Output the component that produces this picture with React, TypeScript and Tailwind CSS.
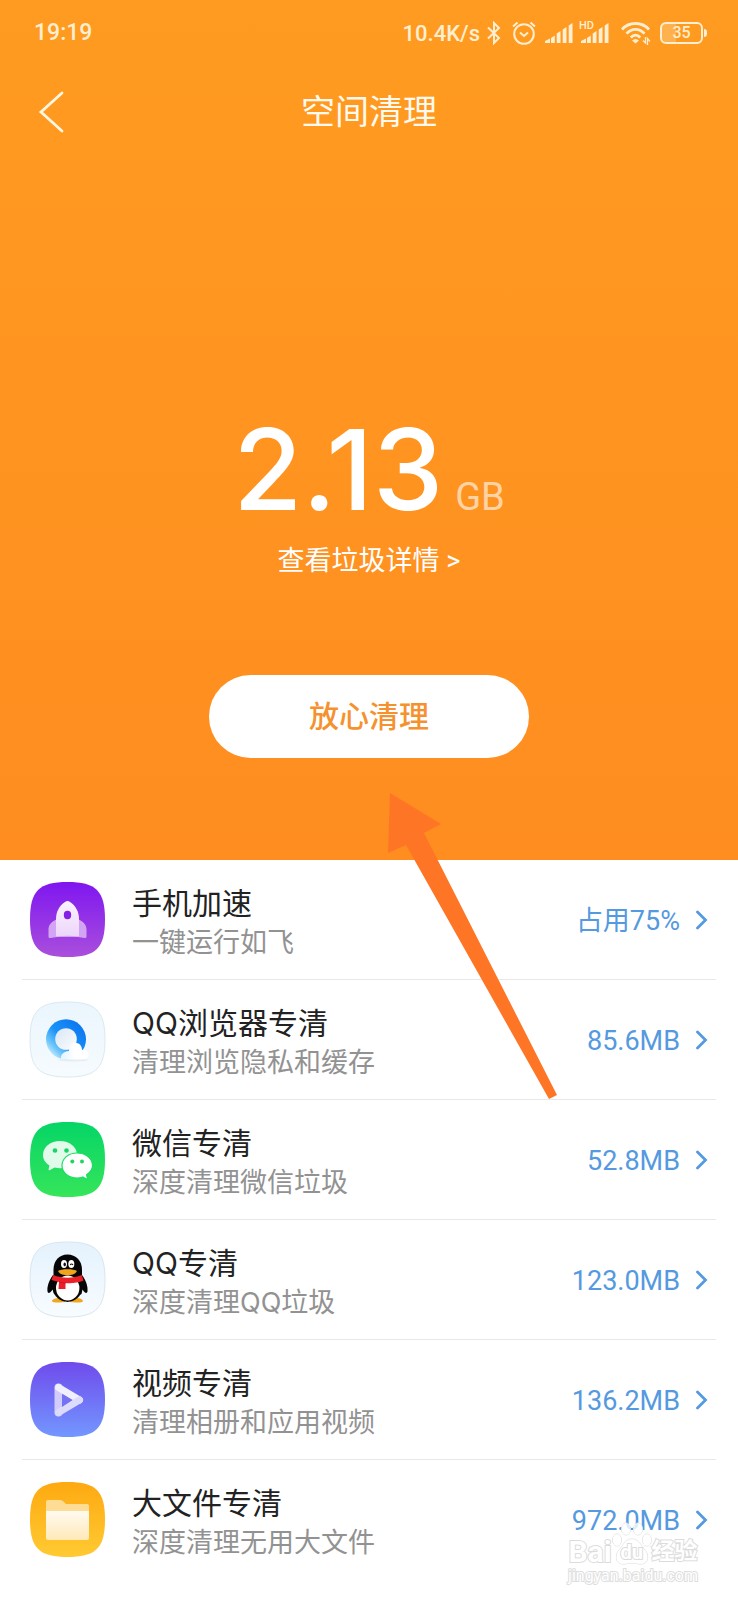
import type { ReactNode } from "react";

const SQUIRCLE =
  "M37.5 0C66 0 75 9 75 37.5S66 75 37.5 75 0 66 0 37.5 9 0 37.5 0Z";

interface AppIconProps {
  id: string;
  from: string;
  to: string;
  outline?: string;
  children: ReactNode;
}

function AppIcon({ id, from, to, outline, children }: AppIconProps) {
  return (
    <svg viewBox="0 0 75 75" className="size-[75px] shrink-0 overflow-visible" aria-hidden="true">
      <defs>
        <linearGradient id={id} x1="0" y1="0" x2="0" y2="1">
          <stop offset="0" stopColor={from} />
          <stop offset="1" stopColor={to} />
        </linearGradient>
      </defs>
      <path d={SQUIRCLE} fill={`url(#${id})`} stroke={outline ?? "none"} />
      {children}
    </svg>
  );
}

function RocketIcon() {
  return (
    <AppIcon id="bg-rocket" from="#7f16f0" to="#a94fdc">
      <defs>
        <linearGradient id="rocket-body" x1="0" y1="0" x2="0" y2="1">
          <stop offset="0" stopColor="#fbf3ff" />
          <stop offset="1" stopColor="#ecd5fa" />
        </linearGradient>
      </defs>
      <path
        d="M27 37C21 40 18.500 43 18.500 47.500V54.500Q18.500 56.500 20.500 56L27 55H48L54.500 56Q56.500 56.500 56.500 54.500V47.500C56.500 43 54 40 48 37Z"
        fill="#d3a4f3"
      />
      <path
        d="M37.500 19Q39 19 40 20C46 24 49 30 49 37V54.500Q37.500 53 26 54.500V37C26 30 29 24 35 20Q36 19 37.500 19Z"
        fill="url(#rocket-body)"
      />
      <ellipse cx="37.5" cy="33" rx="3.700" ry="4.200" fill="#8421e4" />
    </AppIcon>
  );
}

function BrowserIcon() {
  return (
    <AppIcon id="bg-browser" from="#eaf6fd" to="#f6fbfe" outline="#dbe9f1">
      <defs>
        <linearGradient id="browser-ring" x1="0.9" y1="0.2" x2="0.15" y2="0.95">
          <stop offset="0" stopColor="#0d77f0" />
          <stop offset="0.5" stopColor="#1a93f8" />
          <stop offset="0.8" stopColor="#71c8fb" />
          <stop offset="1" stopColor="#d8f0fd" />
        </linearGradient>
        <linearGradient id="browser-core" x1="0" y1="0" x2="1" y2="1">
          <stop offset="0" stopColor="#dbe6f3" />
          <stop offset="1" stopColor="#fafdff" />
        </linearGradient>
        <linearGradient id="browser-cloud" x1="0" y1="0" x2="1" y2="0">
          <stop offset="0" stopColor="#e3f3fd" />
          <stop offset="0.5" stopColor="#ffffff" />
        </linearGradient>
      </defs>
      <ellipse cx="43" cy="58" rx="15" ry="1.500" fill="#e2edf4" />
      <circle cx="36" cy="37.300" r="20" fill="url(#browser-ring)" />
      <circle cx="36" cy="37" r="10.800" fill="url(#browser-core)" />
      <path
        d="M31 57.500C30 53 34 49 39 49C39 43 43 40 47 41C50.500 42 52 45 52 48C56 47 59 50 58.500 53C58 56 56 57.500 53 57.500Z"
        fill="url(#browser-cloud)"
      />
    </AppIcon>
  );
}

function WechatIcon() {
  return (
    <AppIcon id="bg-wechat" from="#05d567" to="#36e55a">
      <path
        d="M30 19C20.500 19 13 25 13 33C13 37.500 15.500 41 19.500 43.500L18.500 47.500Q18.800 48.800 20.200 48L24.500 45.600Q27 46.300 30 46.300C40 46.300 47 40.500 47 32.500C47 25 39.500 19 30 19Z"
        fill="#e0fbe9"
      />
      <path
        d="M47 31C38.500 31 32 36.500 32 43.500S38.500 56 47 56C49 56 51 55.700 52.800 55L56.300 57Q57.500 57.300 57.300 56L56.600 52.800C60 50.500 62.500 47.300 62.500 43.500C62.500 36.500 55.500 31 47 31Z"
        fill="#fff"
        stroke="#1cdd60"
        strokeWidth="1.2"
      />
      <circle cx="25" cy="28.500" r="2.300" fill="#17d465" />
      <circle cx="36.500" cy="28.500" r="2.300" fill="#17d465" />
      <circle cx="42.300" cy="39.500" r="2" fill="#1fd65f" />
      <circle cx="52" cy="39.500" r="2" fill="#1fd65f" />
    </AppIcon>
  );
}

function PenguinIcon() {
  return (
    <AppIcon id="bg-penguin" from="#e4f2fd" to="#f8fcff" outline="#d8e6ee">
      <path
        d="M23 33C18.500 39 17 45 17.500 49.500C18 52 20.500 51 22.500 47.500L24 52L37.500 60L51.500 52L52.500 47.500C54.500 51 57 52 57.500 49.500C58 45 56.500 39 52 33Z"
        fill="#060606"
      />
      <path d="M30 56C25 56 22 57.500 22 59Q22 60.500 29 60.500L36 60 30 56ZM46 56C50 56 53 57.500 53 59Q53 60.500 46 60.500L39 60Z" fill="#f2a71b" />
      <path d="M37.500 12.500C29 12.500 23.500 19 23.500 27.500V37H52V27.500C52 19 46 12.500 37.500 12.500Z" fill="#060606" />
      <ellipse cx="37.500" cy="46" rx="14.500" ry="13.800" fill="#060606" />
      <ellipse cx="37.700" cy="46" rx="11.700" ry="12.500" fill="#fff" />
      <ellipse cx="34" cy="22" rx="3" ry="4" fill="#fff" />
      <ellipse cx="41.300" cy="22" rx="3" ry="4" fill="#fff" />
      <ellipse cx="34.700" cy="22.400" rx="1.200" ry="1.900" fill="#111" />
      <path d="M40.200 23Q41.500 21 43 23" fill="none" stroke="#111" strokeWidth="1.2" />
      <path d="M28 29C31 26.800 44 26.800 47 29C45 32.500 41 33.300 37.500 33.300S30 32.500 28 29Z" fill="#f3a51a" />
      <path d="M23.300 33C32 36.500 43 36.500 51.700 33L53.500 38.500C48 41 41 41.500 35.500 41V47H28.500L29 40L21.500 38Z" fill="#ec1f28" />
      <path d="M29 40L35.500 41.300" stroke="#b8141c" strokeWidth="0.8" />
    </AppIcon>
  );
}

function VideoIcon() {
  return (
    <AppIcon id="bg-video" from="#6f4bec" to="#7397ff">
      <path d="M28.500 25.500V50.500" stroke="#d2ccfa" strokeWidth="8" strokeLinecap="round" />
      <path d="M28.500 25.500L49.500 38" stroke="#f1effe" strokeWidth="7" strokeLinecap="round" />
      <path d="M28.500 50.500L49.500 38" stroke="#dddbfc" strokeWidth="7" strokeLinecap="round" />
      <path d="M32 32V45L42 38.300Z" fill="#7472f3" />
    </AppIcon>
  );
}

function FolderIcon() {
  return (
    <AppIcon id="bg-folder" from="#fea911" to="#ffca32">
      <defs>
        <linearGradient id="folder-front" x1="0" y1="0" x2="0" y2="1">
          <stop offset="0" stopColor="#fffaf0" />
          <stop offset="1" stopColor="#ffe9b8" />
        </linearGradient>
      </defs>
      <path d="M16 30V20Q16 18 18 18H30Q32 18 33.500 19.500L36 22H57Q59 22 59 24V30Z" fill="#ffdc94" />
      <path d="M16 29H59V56Q59 58 57 58H18Q16 58 16 56Z" fill="url(#folder-front)" />
    </AppIcon>
  );
}

function SignalBars({ className }: { className?: string }) {
  return (
    <svg viewBox="0 0 28 20" className={className} fill="currentColor" aria-hidden="true">
      <path d="M0 20V18L5 15.500V20ZM6 15L9.800 12.500V20H6ZM11.700 10.500L15.500 8V20H11.700ZM17.700 6.500L21.500 4V20H17.700ZM23.700 2.500L27.500 0V20H23.700Z" />
    </svg>
  );
}

function StatusBar() {
  return (
    <div className="flex h-[66px] items-center justify-between pr-[31px] pl-[34px] text-[#ffeed0]">
      <span className="text-[23px] font-medium">19:19</span>
      <div className="flex items-center">
        <span className="text-[22px] font-medium">10.4K/s</span>
        <svg viewBox="0 0 14 24" className="ml-[7px] h-6 w-[14px]" fill="none" stroke="currentColor" strokeWidth="2" aria-hidden="true">
          <path d="M1 6.500L12 17L7 22V2L12 7L1 17.500" />
        </svg>
        <svg viewBox="0 0 24 24" className="ml-[11px] size-6" fill="none" stroke="currentColor" strokeWidth="2" aria-hidden="true">
          <circle cx="12" cy="13" r="9.800" />
          <path d="M8 11.500L12 15L16 11.500M1 5.500L5.500 1.500M23 5.500L18.500 1.500" />
        </svg>
        <SignalBars className="ml-[9px] h-5 w-7" />
        <span className="relative ml-2">
          <SignalBars className="h-5 w-7" />
          <span className="absolute -top-[3px] -left-[2px] bg-[#ff9a20] text-[11px] leading-[11px] font-medium">
            HD
          </span>
        </span>
        <svg viewBox="0 0 30 24" className="ml-3 h-6 w-[30px]" aria-hidden="true">
          <g fill="none" stroke="currentColor" strokeWidth="2.800">
            <path d="M1 8.500C8 .5 21 .5 28 8.500" />
            <path d="M5.500 12.700C10.500 7 18.500 7 23.500 12.700" />
            <path d="M9.800 16.500C12.700 13.200 16.300 13.200 19.200 16.500" />
          </g>
          <path d="M11 19.500Q14.500 16.500 18 19.500L14.500 22.500Z" fill="currentColor" />
          <path d="M24.500 16V22L22 19.500M26.500 24V17.500L29 20.500" fill="none" stroke="currentColor" strokeWidth="1.300" />
        </svg>
        <span className="ml-[9px] flex h-[22px] w-[43px] items-center justify-center rounded-[6px] border-2 border-current bg-linear-to-r from-[#ffb14e] from-35% to-transparent to-35% text-[16px] leading-none font-medium">
          35
        </span>
        <span className="ml-px h-2 w-[3px] rounded-r-sm bg-current" />
      </div>
    </div>
  );
}

function Hero() {
  return (
    <header className="bg-linear-to-b from-[#ff9b20] to-[#ff8d20] pb-[102px] text-white">
      <StatusBar />
      <div className="grid h-[92px] grid-cols-[1fr_auto_1fr] items-center px-[38px]">
        <button type="button" aria-label="返回" className="justify-self-start">
          <svg viewBox="0 0 28 44" className="h-11 w-7" fill="none" stroke="#fff6e0" strokeWidth="2.800" strokeLinecap="round" aria-hidden="true">
            <path d="M24 3L3 22L24 41" />
          </svg>
        </button>
        <h1 className="text-[34px] leading-[42px] text-[#fffaf0]">空间清理</h1>
      </div>
      <div className="mt-[254px] flex items-baseline justify-center gap-3 leading-none">
        <span className="font-['Inter',sans-serif] text-[112px] leading-[115px] font-medium">2.13</span>
        <span className="text-[38px] leading-[38px] text-white/60">GB</span>
      </div>
      <div className="mt-[14px] text-center">
        <a href="#detail" className="text-[27px] leading-[40px]">
          查看垃圾详情 &gt;
        </a>
      </div>
      <div className="mt-[94px] flex justify-center">
        <button
          type="button"
          className="h-[83px] w-80 rounded-full bg-white text-[30px] font-medium text-[#f5922f]"
        >
          放心清理
        </button>
      </div>
    </header>
  );
}

const items = [
  { title: "手机加速", desc: "一键运行如飞", value: "占用75%", icon: <RocketIcon /> },
  { title: "QQ浏览器专清", desc: "清理浏览隐私和缓存", value: "85.6MB", icon: <BrowserIcon /> },
  { title: "微信专清", desc: "深度清理微信垃圾", value: "52.8MB", icon: <WechatIcon /> },
  { title: "QQ专清", desc: "深度清理QQ垃圾", value: "123.0MB", icon: <PenguinIcon /> },
  { title: "视频专清", desc: "清理相册和应用视频", value: "136.2MB", icon: <VideoIcon /> },
  { title: "大文件专清", desc: "深度清理无用大文件", value: "972.0MB", icon: <FolderIcon /> },
];

function CleanList() {
  return (
    <ul className="mx-[22px] pb-5">
      {items.map((item) => (
        <li key={item.title} className="border-b border-[#e8e8e8] last:border-transparent">
          <a href="#clean" className="flex h-[119px] items-center px-2">
            {item.icon}
            <span className="ml-[27px] flex flex-1 flex-col pt-[6px] font-['Inter','Noto_Sans_CJK_SC',sans-serif]">
              <span className="text-[30px] leading-[40px] text-[#222]">{item.title}</span>
              <span className="text-[27px] leading-[40px] text-[#929292]">{item.desc}</span>
            </span>
            <span className="pt-[3px] text-[27px] text-[#5599e0]">{item.value}</span>
            <svg viewBox="0 0 12 20" className="ml-4 h-5 w-3" fill="none" stroke="#5599e0" strokeWidth="2.800" strokeLinecap="round" aria-hidden="true">
              <path d="M1.500 2L9.500 10L1.500 18" />
            </svg>
          </a>
        </li>
      ))}
    </ul>
  );
}

function PointerArrow() {
  return (
    <svg
      viewBox="0 0 170 308"
      className="pointer-events-none absolute top-[792px] left-[387px] h-[308px] w-[170px]"
      fill="#ff7526"
      aria-hidden="true"
    >
      <path d="M3 1L54 32L37 41L170 303L162 307L19 53L1 61Z" />
    </svg>
  );
}

function Watermark() {
  return (
    <div className="pointer-events-none absolute right-[40px] bottom-[14px] flex flex-col items-center text-white [paint-order:stroke_fill]">
      <div className="flex items-end leading-[28px] font-bold [-webkit-text-stroke:2px_#dcdcdc]">
        <span className="text-[30px]">Bai</span>
        <span className="relative">
          <svg viewBox="0 0 40 44" className="h-11 w-10" fill="#ffffff" fillOpacity="0.8" stroke="#dcdcdc" aria-hidden="true">
            <ellipse cx="5" cy="18" rx="4.500" ry="6" />
            <ellipse cx="14" cy="7" rx="4.500" ry="6" />
            <ellipse cx="26" cy="7" rx="4.500" ry="6" />
            <ellipse cx="35" cy="18" rx="4.500" ry="6" />
            <path d="M20 17C27 17 29 24 33 28C37 32 37 42 29 42C25 42 24 41 20 41S15 42 11 42C3 42 3 32 7 28C11 24 13 17 20 17Z" />
          </svg>
          <span className="absolute bottom-0 left-[9px] text-[20px]">du</span>
        </span>
        <span className="text-[23px]">经验</span>
      </div>
      <span className="text-[16px] leading-[20px] [-webkit-text-stroke:2px_#dedede]">jingyan.baidu.com</span>
    </div>
  );
}

export default function App() {
  return (
    <main lang="zh-CN" className="relative min-h-screen bg-white font-['Roboto','Noto_Sans_CJK_SC',sans-serif]">
      <Hero />
      <CleanList />
      <PointerArrow />
      <Watermark />
    </main>
  );
}
